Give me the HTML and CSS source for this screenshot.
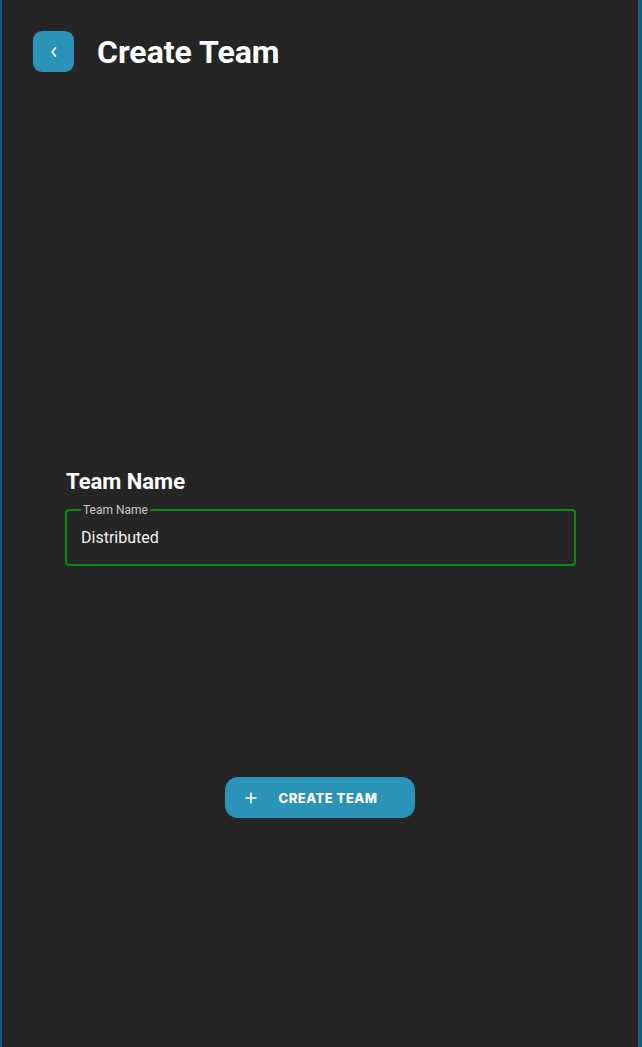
FILE: index.html
```html
<!DOCTYPE html>
<html>
<head>
<meta charset="utf-8">
<link rel="stylesheet" href="styles.css">
</head>
<body>
<div class="app">
  <header class="header">
    <button class="back" aria-label="Back">
      <svg width="10" height="12" viewBox="0 0 10 12"><path d="M6.5 2 L3 6 L6.5 10" fill="none" stroke="#fff" stroke-width="1.8" stroke-linecap="round" stroke-linejoin="round"/></svg>
    </button>
    <h1 class="title">Create Team</h1>
  </header>
  <main class="form">
    <h2 class="label">Team Name</h2>
    <div class="field">
      <span class="legend">Team Name</span>
      <div class="value">Distributed</div>
    </div>
    <div class="actions">
      <button class="create">
        <svg width="12" height="12" viewBox="0 0 12 12"><path d="M6 0.5 V11.5 M0.5 6 H11.5" stroke="#fff" stroke-width="1.6"/></svg>
        <span>CREATE TEAM</span>
      </button>
    </div>
  </main>
</div>
</body>
</html>
```
FILE: styles.css
```css
html, body {
  margin: 0;
  padding: 0;
  background: #252525;
}
.app {
  box-sizing: border-box;
  width: 642px;
  height: 1047px;
  background: #252525;
  border-left: 2px solid #0d5f88;
  border-right: 3px solid #0d5f88;
  font-family: Roboto, "Liberation Sans", sans-serif;
  color: #fff;
  box-shadow: inset -1px 0 0 #555;
}
.header {
  display: flex;
  align-items: center;
  padding: 31px 0 0 31px;
}
.back {
  width: 41px;
  height: 41px;
  border: 0;
  border-radius: 9px;
  background: #2a93b8;
  display: flex;
  align-items: center;
  justify-content: center;
  padding: 0;
}
.title {
  margin: 0 0 0 23px;
  font-size: 32px;
  font-weight: 700;
  line-height: 38px;
}
.form {
  padding: 0 63px 0 63px;
  margin-top: 396px;
}
.label {
  margin: 0;
  font-size: 22px;
  font-weight: 700;
  line-height: 28px;
  padding-left: 1px;
}
.field {
  position: relative;
  margin-top: 13px;
  border: 2px solid #0b8a0b;
  border-radius: 4px;
  height: 57px;
  box-sizing: border-box;
  padding: 0 0 0 14px;
}
.legend {
  position: absolute;
  left: 14px;
  top: -8px;
  font-size: 12px;
  color: #c8c8c8;
  padding: 0 2px 0 2px;
  line-height: 14px;
  background: #252525;
}
.value {
  font-size: 16px;
  line-height: 20px;
  margin-top: 17px;
  color: #f2f2f2;
}
.actions {
  display: flex;
  justify-content: center;
  margin-top: 211px;
  padding-right: 2px;
}
.create {
  display: flex;
  align-items: center;
  gap: 22px;
  width: 190px;
  height: 41px;
  box-sizing: border-box;
  padding: 0 0 0 20px;
  border: 0;
  border-radius: 13px;
  background: #2a93b8;
  color: #fff;
  font-family: Inter, "Open Sans", sans-serif;
  font-weight: 800;
  font-size: 13px;
  letter-spacing: 0.5px;
}
```
